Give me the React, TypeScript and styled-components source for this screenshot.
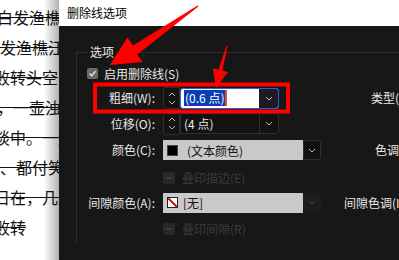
import React from 'react';
import styled, { createGlobalStyle } from 'styled-components';

const GlobalStyle = createGlobalStyle`
  html, body {
    margin: 0;
    padding: 0;
    background: #fff;
  }
`;

const Screen = styled.div`
  position: relative;
  display: flex;
  width: 399px;
  height: 260px;
  overflow: hidden;
`;

// document behind the dialog
const DocPane = styled.div`
  flex: none;
  width: 59px;
  padding-top: 2px;
  overflow: hidden;
  background: linear-gradient(90deg, #fff 0, #fff 44px, #b2b2b2 59px);
`;

const DocLine = styled.div<{ $shift: number }>`
  height: 30px;
  line-height: 30px;
  margin-left: ${p => p.$shift}px;
  white-space: nowrap;
  font-family: 'Noto Sans CJK SC', sans-serif;
  font-size: 16px;
  color: #111;
  text-decoration: line-through;
  text-decoration-thickness: 1px;
`;

const Dialog = styled.div`
  flex: 1;
  min-width: 0;
  display: flex;
  flex-direction: column;
  overflow: hidden;
  background: #171717;
  font-family: 'Noto Sans CJK SC', 'Noto Sans', sans-serif;
  font-size: 12px;
  color: #e8e8e8;
`;

const TitleBar = styled.div`
  flex: none;
  height: 26px;
  display: flex;
  align-items: center;
  padding: 0 0 2px 8px;
  box-sizing: border-box;
  background: #fff;
  color: #000;
`;

const Body = styled.div`
  flex: 1;
  padding: 18px 0 0 17px;
`;

const Group = styled.fieldset`
  margin: 0;
  padding: 5px 0 0 0;
  min-width: 0;
  border: 0;
  border-top: 1px solid #2c2c2c;
  border-left: 1px solid #2c2c2c;
`;

const Legend = styled.legend`
  margin-left: 11px;
  padding: 0 2px;
  line-height: 16px;
`;

const CheckRow = styled.div`
  display: flex;
  align-items: center;
  gap: 6px;
  height: 17px;
  margin: 0 0 3px 10px;
  white-space: nowrap;
`;

const CheckBox = styled.span`
  width: 11px;
  height: 11px;
  border-radius: 2px;
  background: #6a6a6a;
  display: flex;
  align-items: center;
  justify-content: center;
`;

const FormGrid = styled.div`
  display: grid;
  grid-template-columns: 78px 158px 90px;
  grid-template-rows: 26px 25px 28px 27px 23px 30px;
  column-gap: 8px;
  align-items: center;
`;

const FieldLabel = styled.div`
  grid-column: 1;
  text-align: right;
  white-space: nowrap;
  line-height: 16px;
`;

const SideLabel = styled.div<{ $indent: number }>`
  grid-column: 3;
  padding-left: ${p => p.$indent}px;
  white-space: nowrap;
  line-height: 16px;
`;

const ControlCell = styled.div`
  grid-column: 2;
  display: flex;
  align-items: center;
`;

const Spinner = styled.div`
  width: 17px;
  height: 22px;
  box-sizing: border-box;
  border: 1px solid #2f2f2f;
  border-radius: 3px 0 0 3px;
  background: #131313;
  display: flex;
  flex-direction: column;
  align-items: center;
  justify-content: center;
  gap: 3px;
`;

const Combo = styled.div<{ $focused?: boolean }>`
  width: 99px;
  height: 21px;
  box-sizing: border-box;
  border: 1px solid ${p => (p.$focused ? '#2b5fd9' : '#2f2f2f')};
  border-radius: 3px;
  background: ${p => (p.$focused ? '#fff' : '#121212')};
  display: flex;
  overflow: hidden;
`;

const ComboText = styled.div`
  flex: 1;
  display: flex;
  align-items: center;
  padding-left: 3px;
  white-space: nowrap;
  line-height: 16px;
`;

const Selection = styled.span`
  background: #0c3db6;
  color: #fff;
  padding: 0 1px;
`;

const Caret = styled.span`
  width: 2px;
  height: 16px;
  background: #e5531d;
`;

const ComboButton = styled.div<{ $focused?: boolean }>`
  flex: none;
  width: 18px;
  background: ${p => (p.$focused ? '#1d1b22' : 'transparent')};
  border-left: 1px solid ${p => (p.$focused ? '#1d1b22' : '#2f2f2f')};
  display: flex;
  align-items: center;
  justify-content: center;
`;

const ColorCombo = styled.div`
  width: 158px;
  height: 20px;
  display: flex;
`;

const ColorField = styled.div<{ $gap: number }>`
  flex: 1;
  display: flex;
  align-items: center;
  gap: ${p => p.$gap}px;
  padding-left: 4px;
  background: #c9c9c9;
  color: #111;
  white-space: nowrap;
`;

const Swatch = styled.span<{ $none?: boolean }>`
  flex: none;
  width: 11px;
  height: 11px;
  box-sizing: border-box;
  border: 1px solid ${p => (p.$none ? '#222' : '#444')};
  background: ${p =>
    p.$none
      ? 'linear-gradient(to top right, #fff 0, #fff 42%, #e01818 42%, #e01818 58%, #fff 58%)'
      : '#000'};
`;

const ColorButton = styled.div<{ $dim?: boolean }>`
  flex: none;
  width: 18px;
  box-sizing: border-box;
  border: 1px solid ${p => (p.$dim ? '#1d1d1d' : '#2f2f2f')};
  border-radius: 3px;
  background: ${p => (p.$dim ? '#1d1d1d' : '#111')};
  display: flex;
  align-items: center;
  justify-content: center;
`;

const DimCheck = styled.div`
  grid-column: 2;
  display: flex;
  align-items: center;
  gap: 7px;
  color: #3b3b3b;
  white-space: nowrap;
  line-height: 16px;
`;

const DimBox = styled.span`
  width: 12px;
  height: 12px;
  border-radius: 2px;
  background: #282828;
  display: flex;
  align-items: center;
  justify-content: center;

  &::after {
    content: '';
    width: 6px;
    height: 2px;
    background: #3c3c3c;
  }
`;

const Annotations = styled.svg`
  position: absolute;
  left: 0;
  top: 0;
  pointer-events: none;
`;

const Chevron: React.FC<{ up?: boolean; color?: string }> = ({ up, color = '#b8b8b8' }) => (
  <svg width="8" height="5" viewBox="0 0 8 5">
    <path
      d={up ? 'M1 4 L4 1 L7 4' : 'M1 1 L4 4 L7 1'}
      fill="none"
      stroke={color}
      strokeWidth="1"
    />
  </svg>
);

const docLines: { text: string; shift: number }[] = [
  { text: '白发渔樵江', shift: -3 },
  { text: '发渔樵江渚', shift: 0 },
  { text: '败转头空', shift: -6 },
  { text: '，一壶浊酒', shift: -3 },
  { text: '谈中。一壶', shift: -6 },
  { text: '、都付笑谈', shift: 0 },
  { text: '日在，几度', shift: -6 },
  { text: '败转', shift: -6 },
];

export default function App() {
  return (
    <>
      <GlobalStyle />
      <Screen>
        <DocPane>
          {docLines.map(l => (
            <DocLine key={l.text} $shift={l.shift}>
              {l.text}
            </DocLine>
          ))}
        </DocPane>

        <Dialog>
          <TitleBar>删除线选项</TitleBar>
          <Body>
            <Group>
              <Legend>选项</Legend>
              <CheckRow>
                <CheckBox>
                  <svg width="9" height="9" viewBox="0 0 9 9">
                    <path d="M1.5 4.5 L3.7 6.7 L7.5 2.2" fill="none" stroke="#e6e6e6" strokeWidth="1.4" />
                  </svg>
                </CheckBox>
                启用删除线(S)
              </CheckRow>

              <FormGrid>
                <FieldLabel>粗细(W):</FieldLabel>
                <ControlCell>
                  <Spinner>
                    <Chevron up />
                    <Chevron />
                  </Spinner>
                  <Combo $focused>
                    <ComboText>
                      <Selection>(0.6 点)</Selection>
                      <Caret />
                    </ComboText>
                    <ComboButton $focused>
                      <Chevron />
                    </ComboButton>
                  </Combo>
                </ControlCell>
                <SideLabel $indent={42}>类型(T):</SideLabel>

                <FieldLabel>位移(O):</FieldLabel>
                <ControlCell>
                  <Spinner>
                    <Chevron up />
                    <Chevron />
                  </Spinner>
                  <Combo>
                    <ComboText>(4 点)</ComboText>
                    <ComboButton>
                      <Chevron />
                    </ComboButton>
                  </Combo>
                </ControlCell>

                <FieldLabel>颜色(C):</FieldLabel>
                <ControlCell>
                  <ColorCombo>
                    <ColorField $gap={9}>
                      <Swatch />
                      (文本颜色)
                    </ColorField>
                    <ColorButton>
                      <Chevron />
                    </ColorButton>
                  </ColorCombo>
                </ControlCell>
                <SideLabel $indent={46}>色调(U):</SideLabel>

                <DimCheck>
                  <DimBox />
                  叠印描边(E)
                </DimCheck>

                <FieldLabel>间隙颜色(A):</FieldLabel>
                <ControlCell>
                  <ColorCombo>
                    <ColorField $gap={5}>
                      <Swatch $none />
                      [无]
                    </ColorField>
                    <ColorButton $dim>
                      <Chevron color="#4a4a4a" />
                    </ColorButton>
                  </ColorCombo>
                </ControlCell>
                <SideLabel $indent={15}>间隙色调(I):</SideLabel>

                <DimCheck>
                  <DimBox />
                  叠印间隙(R)
                </DimCheck>
              </FormGrid>
            </Group>
          </Body>
        </Dialog>

        {/* red annotation marks drawn over the screenshot */}
        <Annotations width="399" height="260" viewBox="0 0 399 260">
          <rect x="95" y="84.5" width="193" height="27" fill="none" stroke="#f00" strokeWidth="4" />
          <polygon
            fill="#f00"
            points="198.4,6.6 137.3,54.4 142.6,62.1 110,65 127.5,37.4 133.0,45.4 197.6,5.4"
          />
          <polygon
            fill="#f00"
            points="227.6,46.1 222.4,70.6 228.0,72.0 216,88 213.0,68.6 218.6,69.6 226.4,45.9"
          />
        </Annotations>
      </Screen>
    </>
  );
}
